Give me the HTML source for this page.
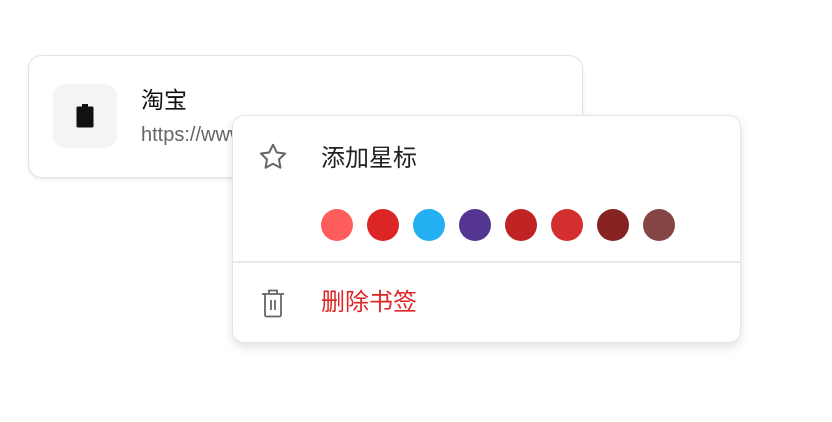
<!DOCTYPE html>
<html><head><meta charset="utf-8"><style>
body{margin:0;width:832px;height:422px;background:#fff;position:relative;overflow:hidden;font-family:"Liberation Sans","Noto Sans CJK SC",sans-serif}
.card{position:absolute;left:28px;top:55px;width:553px;height:121px;border:1px solid #e2e2e2;border-radius:14px;box-shadow:0 2px 4px rgba(0,0,0,.08);background:#fff}
.ib{position:absolute;left:24px;top:28px;width:64px;height:64px;border-radius:12px;background:#f4f4f4}
.t{position:absolute;left:112px;top:25px;font-size:23px;color:#111}
.u{position:absolute;left:112px;top:68px;font-size:20px;color:#666}
.menu{position:absolute;left:232px;top:115px;width:507px;height:226px;border:1px solid #e4e4e4;border-radius:12px;background:#fff;box-shadow:0 4px 10px rgba(0,0,0,.12)}
.m1{position:absolute;left:88px;top:22px;font-size:24px;color:#222}
.m2{position:absolute;left:88px;top:166px;font-size:24px;color:#dc2626}
.dot{position:absolute;top:93px;width:32px;height:32px;border-radius:50%}
.hr{position:absolute;left:0;right:0;top:145px;height:2px;background:#e8e8e8}
</style></head><body>
<div class="card">
<div class="ib"><svg style="position:absolute;left:21px;top:19px" width="22" height="26" viewBox="0 0 22 26"><path d="M8 1h6v2.5h4a1.5 1.5 0 0 1 1.5 1.5v18a1.5 1.5 0 0 1-1.5 1.5H4A1.5 1.5 0 0 1 2.5 23V5A1.5 1.5 0 0 1 4 3.5h4z" fill="#111"/></svg></div>
<div class="t">淘宝</div><div class="u">https://www.taobao.com</div>
</div>
<div class="menu">
<svg style="position:absolute;left:24px;top:25px" width="32" height="32" viewBox="0 0 24 24"><path d="M12 2.8l2.8 5.8 6.3.8-4.6 4.4 1.1 6.3L12 17.1l-5.6 3 1.1-6.3L2.9 9.4l6.3-.8z" fill="none" stroke="#666" stroke-width="1.5" stroke-linejoin="round"/></svg>
<div class="m1">添加星标</div>
<div class="dot" style="left:88px;background:#ff5c5c"></div>
<div class="dot" style="left:134px;background:#dc2626"></div>
<div class="dot" style="left:180px;background:#22b0f2"></div>
<div class="dot" style="left:226px;background:#553592"></div>
<div class="dot" style="left:272px;background:#c02323"></div>
<div class="dot" style="left:318px;background:#d32f2f"></div>
<div class="dot" style="left:364px;background:#862222"></div>
<div class="dot" style="left:410px;background:#854545"></div>
<div class="hr"></div>
<svg style="position:absolute;left:25px;top:171px" width="30" height="32" viewBox="0 0 30 32"><path d="M4 7h22M11 7V3.5h8V7M7 7v21a1.5 1.5 0 0 0 1.5 1.5h13A1.5 1.5 0 0 0 23 28V7M13 13v10M17 13v10" fill="none" stroke="#666" stroke-width="1.8"/></svg>
<div class="m2">删除书签</div>
</div>
</body></html>
